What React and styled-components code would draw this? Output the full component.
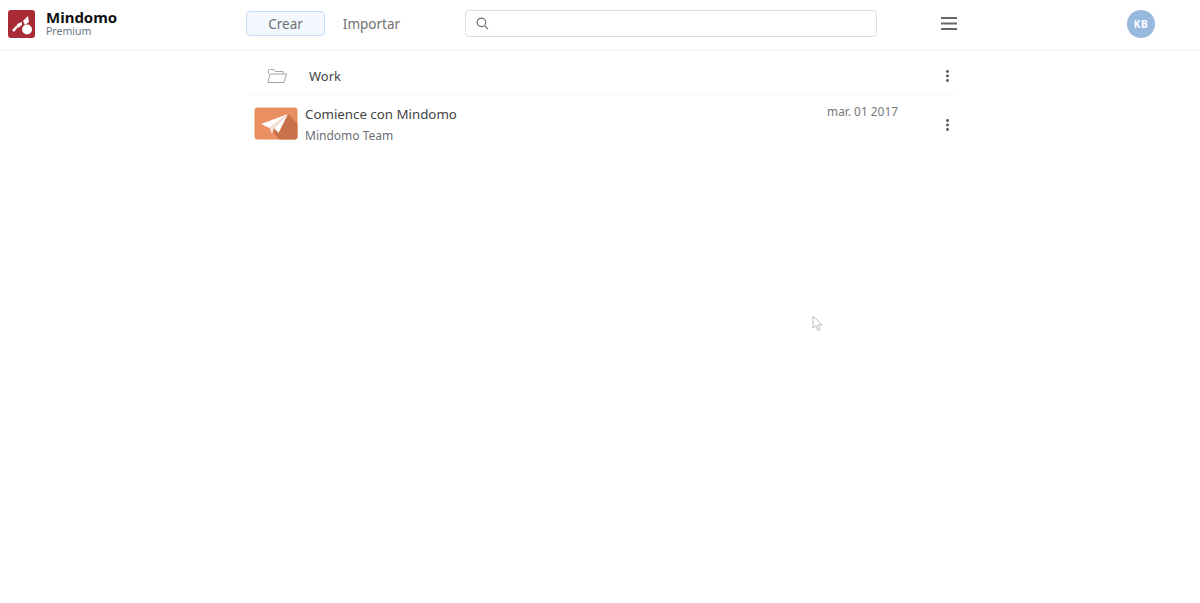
import styled, { createGlobalStyle } from "styled-components";

const GlobalStyle = createGlobalStyle`
  html, body {
    margin: 0;
    padding: 0;
    background: #fff;
    font-family: "Noto Sans", "Open Sans", sans-serif;
  }
`;

const Page = styled.div`
  position: relative;
  width: 1200px;
  height: 603px;
  overflow: hidden;
`;

const Header = styled.header`
  display: flex;
  align-items: center;
  box-sizing: border-box;
  height: 51px;
  padding-bottom: 3px;
  border-bottom: 1px solid #f0f0f0;
`;

const Brand = styled.div`
  display: flex;
  align-items: center;
  gap: 11px;
  width: 246px;
  padding-left: 8px;
  box-sizing: border-box;
`;

const BrandText = styled.div`
  display: flex;
  flex-direction: column;
`;

const BrandName = styled.span`
  font-size: 15px;
  font-weight: 700;
  line-height: 15px;
  color: #111;
`;

const BrandPlan = styled.span`
  margin-top: 1px;
  font-size: 10.5px;
  line-height: 11px;
  color: #6b7583;
`;

const Tab = styled.div`
  display: flex;
  align-items: center;
  justify-content: center;
  box-sizing: border-box;
  width: ${(p) => (p.$active ? "79px" : "93px")};
  height: 25px;
  font-size: 13.5px;
  color: #707070;
  border-radius: 4px;
  border: 1px solid ${(p) => (p.$active ? "#c4dcf5" : "transparent")};
  background: ${(p) => (p.$active ? "#f2f8fe" : "transparent")};
`;

const SearchBox = styled.div`
  display: flex;
  align-items: center;
  box-sizing: border-box;
  width: 412px;
  height: 27px;
  margin-left: 47px;
  padding-left: 10px;
  border: 1px solid #dedede;
  border-radius: 4px;
`;

const MenuButton = styled.div`
  display: flex;
  margin-left: 64px;
`;

const Avatar = styled.div`
  display: flex;
  align-items: center;
  justify-content: center;
  width: 28px;
  height: 28px;
  margin-left: 170px;
  border-radius: 50%;
  background: #97b9de;
  color: #fff;
  font-size: 10px;
  font-weight: 700;
  letter-spacing: 0.5px;
`;

const List = styled.main`
  width: 709px;
  margin-left: 248px;
`;

const FolderRow = styled.div`
  display: flex;
  align-items: center;
  box-sizing: border-box;
  height: 44px;
  padding: 7px 0 0 19px;
  border-bottom: 1px solid #f5f5f5;
`;

const FolderName = styled.span`
  margin-left: 22px;
  font-size: 13px;
  color: #444;
`;

const DocRow = styled.div`
  display: flex;
  height: 60px;
  padding-left: 6px;
`;

const Thumb = styled.div`
  display: flex;
  flex-shrink: 0;
  margin-top: 12px;
  width: 44px;
  height: 33px;
`;

const DocInfo = styled.div`
  display: flex;
  flex-direction: column;
  margin-left: 7px;
  padding-top: 10px;
`;

const DocTitle = styled.span`
  font-size: 13.3px;
  line-height: 18px;
  color: #444;
`;

const DocOwner = styled.span`
  margin-top: 4px;
  font-size: 12px;
  line-height: 17px;
  color: #6a6f78;
`;

const DocDate = styled.span`
  margin-left: auto;
  padding-top: 8px;
  font-size: 11.9px;
  line-height: 16px;
  color: #777;
`;

const MoreButton = styled.div`
  display: flex;
  align-items: center;
  justify-content: center;
  width: 19px;
  margin-left: ${(p) => (p.$first ? "auto" : "40px")};
  height: ${(p) => (p.$doc ? "60px" : "auto")};
`;

const Cursor = styled.svg`
  position: absolute;
  left: 812px;
  top: 315px;
`;

const More = () => (
  <svg width="3" height="12" viewBox="0 0 3 12">
    <circle cx="1.5" cy="1.5" r="1.4" fill="#555" />
    <circle cx="1.5" cy="6" r="1.4" fill="#555" />
    <circle cx="1.5" cy="10.5" r="1.4" fill="#555" />
  </svg>
);

const Logo = () => (
  <svg width="27" height="28" viewBox="0 0 27 28">
    <rect width="27" height="28" rx="3" fill="#a82a35" />
    <circle cx="19" cy="19.5" r="5" fill="#fff" />
    <path d="M15 11 L20 6 L21 12 L17 15 Z" fill="#fff" />
    <path d="M9 14 L14 12 L14 15 L10 18 Z" fill="#fff" />
    <path d="M4 20 L9 15 L10 17 L6 22 Z" fill="#fff" />
  </svg>
);

export default function App() {
  return (
    <Page>
      <GlobalStyle />
      <Header>
        <Brand>
          <Logo />
          <BrandText>
            <BrandName>Mindomo</BrandName>
            <BrandPlan>Premium</BrandPlan>
          </BrandText>
        </Brand>
        <Tab $active>Crear</Tab>
        <Tab>Importar</Tab>
        <SearchBox>
          <svg width="13" height="13" viewBox="0 0 14 14" fill="none" stroke="#666" strokeWidth="1.2">
            <circle cx="5.8" cy="5.8" r="4.6" />
            <path d="M9.2 9.2 L13 13" />
          </svg>
        </SearchBox>
        <MenuButton>
          <svg width="16" height="13" viewBox="0 0 16 13">
            <rect width="16" height="2" y="0" fill="#666" />
            <rect width="16" height="2" y="5.5" fill="#666" />
            <rect width="16" height="2" y="11" fill="#666" />
          </svg>
        </MenuButton>
        <Avatar>KB</Avatar>
      </Header>
      <List>
        <FolderRow>
          <svg width="20" height="14" viewBox="0 0 20 14" fill="none" stroke="#999" strokeWidth="0.9">
            <path d="M1.5 5 V1.5 Q1.5 0.5 2.5 0.5 H7 L8.5 2.5 H16 V5" />
            <path d="M3 5 H19.5 L17 13.5 H1 Z" />
          </svg>
          <FolderName>Work</FolderName>
          <MoreButton $first>
            <More />
          </MoreButton>
        </FolderRow>
        <DocRow>
          <Thumb>
            <svg width="44" height="33" viewBox="0 0 44 33">
              <rect x="0.5" y="0.5" width="43" height="32" rx="3" fill="#e98f60" />
              <path d="M16 21 L34 7 L43.5 17 V29.5 Q43.5 32.5 40.5 32.5 H25 Z" fill="#c9714b" />
              <path d="M7 17 L34 7 L15.5 21 Z" fill="#fff" />
              <path d="M20 21 L34 7 L24.5 26 Z" fill="#fff" />
              <path d="M15.5 21 L34 7 L20 21.5 L18 27 Z" fill="#f4e2d8" />
            </svg>
          </Thumb>
          <DocInfo>
            <DocTitle>Comience con Mindomo</DocTitle>
            <DocOwner>Mindomo Team</DocOwner>
          </DocInfo>
          <DocDate>mar. 01 2017</DocDate>
          <MoreButton $doc>
            <More />
          </MoreButton>
        </DocRow>
      </List>
      <Cursor width="11" height="17" viewBox="0 0 11 17" fill="#fff" stroke="#aaa" strokeWidth="0.8">
        <path d="M1 1 V13 L4 10.5 L6 15.5 L8 14.5 L6 10 H10 Z" />
      </Cursor>
    </Page>
  );
}
